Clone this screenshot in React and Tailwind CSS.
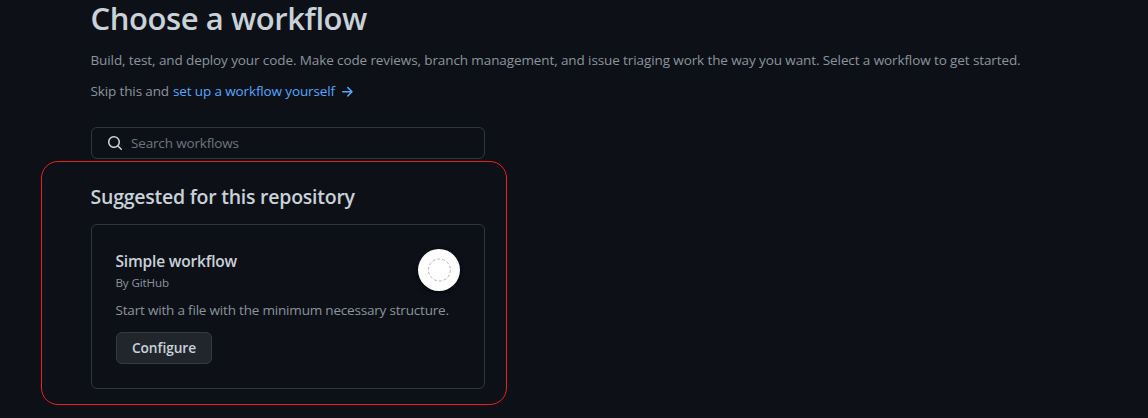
import React from "react";

function SearchIcon() {
  return (
    <svg width="16" height="16" viewBox="0 0 16 16" className="shrink-0 fill-[#c9d1d9]" aria-hidden="true">
      <path d="M11.5 7a4.499 4.499 0 11-8.998 0A4.499 4.499 0 0111.5 7zm-.82 4.74a6 6 0 111.06-1.06l3.04 3.04a.75.75 0 11-1.06 1.06l-3.04-3.04z" fillRule="evenodd" />
    </svg>
  );
}

function ArrowRightIcon() {
  return (
    <svg width="16" height="16" viewBox="0 0 16 16" className="shrink-0 fill-[#58a6ff]" aria-hidden="true">
      <path d="M8.22 2.97a.75.75 0 011.06 0l4.25 4.25a.75.75 0 010 1.06l-4.25 4.25a.75.75 0 01-1.06-1.06l2.97-2.97H3.75a.75.75 0 010-1.5h7.44L8.22 4.03a.75.75 0 010-1.06z" fillRule="evenodd" />
    </svg>
  );
}

function WorkflowCard() {
  return (
    <article className="mt-[14px] ml-[0.5px] flex h-[165px] w-[394px] flex-col rounded-md border border-[#30363d] pl-6 pr-6 pt-6">
      <div className="flex h-[51px] justify-between">
        <div className="-ml-[0.5px]">
          <h3 className="h-6 whitespace-nowrap text-[15.5px] font-semibold leading-6 tracking-[-0.18px] text-[#c9d1d9]">Simple workflow</h3>
          <p className="mt-[1px] h-[18px] whitespace-nowrap text-[11.6px] leading-[18px] tracking-[-0.12px] text-[#8b949e]">By GitHub</p>
        </div>
        <div className="flex size-[42px] shrink-0 items-center justify-center rounded-full bg-white shadow-[0_2px_5px_rgba(1,4,9,0.85)]">
          <svg width="26" height="26" viewBox="0 0 26 26" fill="none" aria-hidden="true">
            <circle cx="13.4" cy="13" r="11" stroke="#b4b4b4" strokeWidth="1" strokeDasharray="2.9 2.037" />
          </svg>
        </div>
      </div>
      <p className="-ml-[0.5px] h-[21px] whitespace-nowrap text-[13.5px] leading-[21px] tracking-[-0.19px] text-[#8b949e]">Start with a file with the minimum necessary structure.</p>
      <button className="mt-[11px] flex h-8 w-24 items-center justify-center rounded-md border border-[#363b42] bg-[#21262d] pb-[1px] text-[13.7px] font-semibold tracking-[-0.05px] text-[#c9d1d9]">
        <span className="leading-[20px]">Configure</span>
      </button>
    </article>
  );
}

export default function App() {
  return (
    <main className="h-[418px] w-full overflow-hidden bg-[#0d1117] pl-[41px] font-['Open_Sans','Noto_Sans',sans-serif]">
      <header className="h-[161px] pl-[49.5px]">
        <h1 className="h-[36px] whitespace-nowrap text-[31px] font-semibold leading-[36px] tracking-[-0.42px] text-[#c9d1d9]">Choose a workflow</h1>
        <p className="mt-[14px] h-[21px] whitespace-nowrap text-[13.5px] leading-[21px] tracking-[-0.103px] text-[#8b949e]">
          Build, test, and deploy your code. Make code reviews, branch management, and issue triaging work the way you want. Select a workflow to get started.
        </p>
        <div className="mt-[10px] flex h-[21px] items-center whitespace-nowrap text-[13.5px] leading-[21px] tracking-[-0.13px] text-[#8b949e]">
          <span className="w-[82.5px]">Skip this and</span>
          <a className="flex items-center text-[#58a6ff]">
            <span className="w-[166px]">set up a workflow yourself</span>
            <ArrowRightIcon />
          </a>
        </div>
        <label className="ml-[0.5px] mt-[25px] flex h-8 w-[394px] items-center gap-2 rounded-md border border-[#30363d] pl-[15px] text-[13.5px] tracking-[-0.16px] text-[#6e7681]">
          <SearchIcon />
          <span className="whitespace-nowrap leading-[21px]">Search workflows</span>
        </label>
      </header>
      <section className="h-[244px] w-[466px] rounded-[17px] border border-[#ed1c24] pl-[48.5px] pt-[22px]">
        <h2 className="h-[26px] whitespace-nowrap text-[19.5px] font-semibold leading-[26px] tracking-[-0.24px] text-[#c9d1d9]">Suggested for this repository</h2>
        <WorkflowCard />
      </section>
    </main>
  );
}
